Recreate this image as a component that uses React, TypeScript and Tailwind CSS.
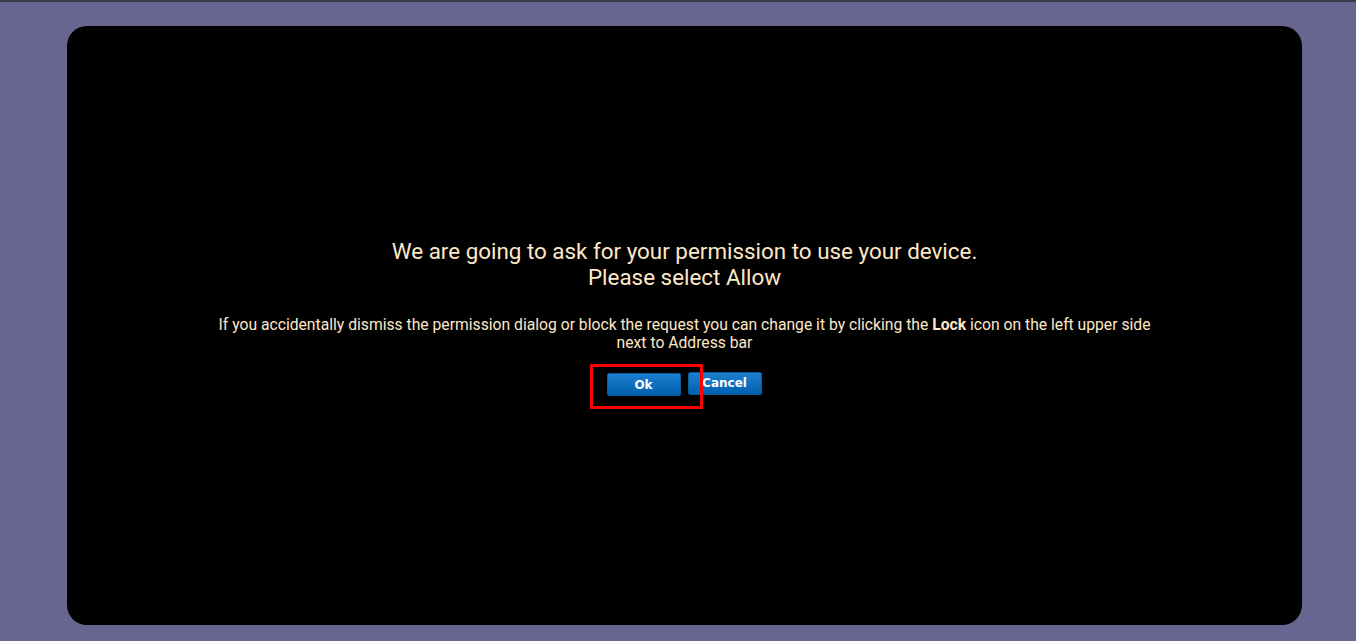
import React from 'react'

export default function App() {
  return (
    <div className="w-[1356px] h-[641px] bg-[#666690] border-t-2 border-[#3a3a4a] pt-[24px] pl-[67px] pr-[54px] pb-[16px] overflow-hidden">
      <div
        className="h-full bg-black rounded-[20px] flex flex-col items-center justify-center text-[#fde8c8] text-center pb-[14px]"
        style={{ fontFamily: 'Roboto, "Liberation Sans", sans-serif' }}
      >
        <h1 className="text-[22.4px] leading-[26px] font-normal mt-[-3px]">
          We are going to ask for your permission to use your device.
          <br />
          Please select Allow
        </h1>
        <p className="mt-[26px] text-[15.7px] leading-[18px] whitespace-nowrap">
          If you accidentally dismiss the permission dialog or block the request you can change it by clicking the{' '}
          <b>Lock</b> icon on the left upper side
          <br />
          next to Address bar
        </p>
        <div className="mt-[20px] flex gap-[7px] mr-[1px]">
          <div className="relative">
            <button
              className="w-[74px] h-[23px] rounded-[2px] text-white text-[12px] font-bold bg-gradient-to-b from-[#1b7fcf] to-[#0061ad] border border-[#0a5a9c]"
              style={{ fontFamily: '"DejaVu Sans", Verdana, sans-serif' }}
            >
              Ok
            </button>
            <div className="absolute left-[-17px] top-[-8px] w-[113px] h-[45px] border-[3px] border-[#ff0000] pointer-events-none" />
          </div>
          <button
            className="w-[74px] h-[23px] rounded-[2px] text-white text-[12px] font-bold bg-gradient-to-b from-[#1b7fcf] to-[#0061ad] border border-[#0a5a9c]"
            style={{ fontFamily: '"DejaVu Sans", Verdana, sans-serif' }}
          >
            Cancel
          </button>
        </div>
      </div>
    </div>
  )
}
